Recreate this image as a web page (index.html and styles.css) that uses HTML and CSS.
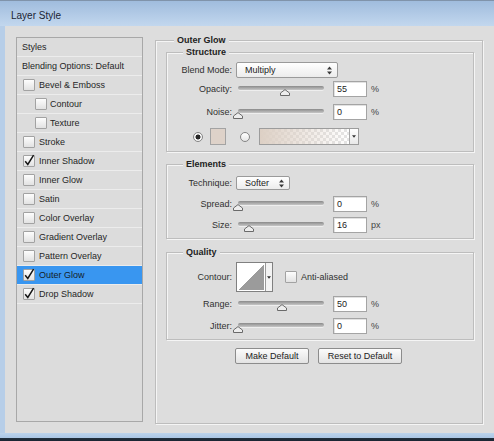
FILE: index.html
```html
<!DOCTYPE html>
<html>
<head>
<meta charset="utf-8">
<title>Layer Style</title>
<link rel="stylesheet" href="styles.css">
</head>
<body>
<div class="window">
  <div class="titlebar">Layer Style</div>
  <div class="frame">
    <div class="stylelist">
      <div class="row head">Styles</div>
      <div class="row head">Blending Options: Default</div>
      <div class="row"><span class="cb"></span>Bevel &amp; Emboss</div>
      <div class="row sub"><span class="cb"></span>Contour</div>
      <div class="row sub"><span class="cb"></span>Texture</div>
      <div class="row"><span class="cb"></span>Stroke</div>
      <div class="row"><span class="cb"><svg class="tick" viewBox="0 0 12 12"><path d="M2.2 6.2 L4.8 9.4 L10.6 0.2"/></svg></span>Inner Shadow</div>
      <div class="row"><span class="cb"></span>Inner Glow</div>
      <div class="row"><span class="cb"></span>Satin</div>
      <div class="row"><span class="cb"></span>Color Overlay</div>
      <div class="row"><span class="cb"></span>Gradient Overlay</div>
      <div class="row"><span class="cb"></span>Pattern Overlay</div>
      <div class="row sel"><span class="cb"><svg class="tick" viewBox="0 0 12 12"><path d="M2.2 6.2 L4.8 9.4 L10.6 0.2"/></svg></span>Outer Glow</div>
      <div class="row"><span class="cb"><svg class="tick" viewBox="0 0 12 12"><path d="M2.2 6.2 L4.8 9.4 L10.6 0.2"/></svg></span>Drop Shadow</div>
    </div>

    <div class="group outer">
      <div class="gtitle">Outer Glow</div>

      <div class="group inner structure">
        <div class="gtitle">Structure</div>
        <div class="field f-blend">
          <span class="lbl">Blend Mode:</span>
          <div class="select wide"><span>Multiply</span><svg class="updown" viewBox="0 0 5 9"><path d="M0 3.5 L2.5 0.5 L5 3.5Z M0 5.5 L2.5 8.5 L5 5.5Z"/></svg></div>
        </div>
        <div class="field f-opacity">
          <span class="lbl">Opacity:</span>
          <div class="slider"><div class="track"><svg class="thumb" style="left:55%" viewBox="0 0 10 7"><path d="M0.5 6.5 L0.5 4 L5 0.6 L9.5 4 L9.5 6.5 Z"/></svg></div></div>
          <div class="num">55</div><span class="unit">%</span>
        </div>
        <div class="field f-noise">
          <span class="lbl">Noise:</span>
          <div class="slider"><div class="track"><svg class="thumb" style="left:0%" viewBox="0 0 10 7"><path d="M0.5 6.5 L0.5 4 L5 0.6 L9.5 4 L9.5 6.5 Z"/></svg></div></div>
          <div class="num">0</div><span class="unit">%</span>
        </div>
        <div class="field f-color">
          <span class="radio on"></span>
          <span class="swatch"></span>
          <span class="radio r2"></span>
          <div class="gradpick"><span class="gfill"></span><span class="gdrop"><svg viewBox="0 0 5 3"><path d="M0 0 L5 0 L2.5 3Z"/></svg></span></div>
        </div>
      </div>

      <div class="group inner elements">
        <div class="gtitle">Elements</div>
        <div class="field f-tech">
          <span class="lbl">Technique:</span>
          <div class="select narrow"><span>Softer</span><svg class="updown" viewBox="0 0 5 9"><path d="M0 3.5 L2.5 0.5 L5 3.5Z M0 5.5 L2.5 8.5 L5 5.5Z"/></svg></div>
        </div>
        <div class="field f-spread">
          <span class="lbl">Spread:</span>
          <div class="slider"><div class="track"><svg class="thumb" style="left:0%" viewBox="0 0 10 7"><path d="M0.5 6.5 L0.5 4 L5 0.6 L9.5 4 L9.5 6.5 Z"/></svg></div></div>
          <div class="num">0</div><span class="unit">%</span>
        </div>
        <div class="field f-size">
          <span class="lbl">Size:</span>
          <div class="slider"><div class="track"><svg class="thumb" style="left:13%" viewBox="0 0 10 7"><path d="M0.5 6.5 L0.5 4 L5 0.6 L9.5 4 L9.5 6.5 Z"/></svg></div></div>
          <div class="num">16</div><span class="unit">px</span>
        </div>
      </div>

      <div class="group inner quality">
        <div class="gtitle">Quality</div>
        <div class="field f-contour">
          <span class="lbl">Contour:</span>
          <div class="contour"><span class="cprev"></span><span class="cdrop"><svg viewBox="0 0 5 3"><path d="M0 0 L5 0 L2.5 3Z"/></svg></span></div>
          <span class="cb aa"></span><span class="aatext">Anti-aliased</span>
        </div>
        <div class="field f-range">
          <span class="lbl">Range:</span>
          <div class="slider"><div class="track"><svg class="thumb" style="left:51%" viewBox="0 0 10 7"><path d="M0.5 6.5 L0.5 4 L5 0.6 L9.5 4 L9.5 6.5 Z"/></svg></div></div>
          <div class="num">50</div><span class="unit">%</span>
        </div>
        <div class="field f-jitter">
          <span class="lbl">Jitter:</span>
          <div class="slider"><div class="track"><svg class="thumb" style="left:0%" viewBox="0 0 10 7"><path d="M0.5 6.5 L0.5 4 L5 0.6 L9.5 4 L9.5 6.5 Z"/></svg></div></div>
          <div class="num">0</div><span class="unit">%</span>
        </div>
      </div>

      <div class="buttons">
        <div class="btn b-make">Make Default</div>
        <div class="btn b-reset">Reset to Default</div>
      </div>
    </div>
  </div>
  <div class="bottombar"></div>
</div>
</body>
</html>
```

FILE: styles.css
```css
* { box-sizing: border-box; }
html, body { margin: 0; padding: 0; }
body {
  width: 494px;
  height: 441px;
  overflow: hidden;
  font-family: "Liberation Sans", Arial, sans-serif;
  font-size: 9px;
  color: #2b2b2b;
  background: #dddddd;
}
.window {
  width: 494px;
  height: 441px;
  display: flex;
  flex-direction: column;
}
.titlebar {
  flex: none;
  height: 26px;
  padding: 9px 0 0 11px;
  line-height: 12px;
  font-size: 10px;
  color: #1a2434;
  border-top: 1px solid #8093aa;
  background: linear-gradient(#a0bcdd, #c2d7ee);
}
.frame {
  flex: 1;
  display: flex;
  align-items: flex-start;
  gap: 12px;
  padding: 11px 0 0 11px;
  border-left: 5px solid #b7cee8;
  background: #dddddd;
}
.bottombar {
  flex: none;
  height: 8px;
  background: linear-gradient(#bcd3ec 0, #aac6e4 5px, #22303e 5px, #1a2532 8px);
}

/* style list */
.stylelist {
  flex: none;
  width: 127px;
  height: 385px;
  border: 1px solid #a8a8a8;
  background: #dcdcdc;
}
.row {
  height: 19px;
  display: flex;
  align-items: center;
  padding-left: 6px;
  border-bottom: 1px solid #ececec;
  color: #262626;
  white-space: nowrap;
}
.row.head { padding-left: 5px; }
.row.sub { padding-left: 18px; }
.row.sel { background: #3996f0; color: #141c28; }
.cb {
  position: relative;
  flex: none;
  width: 12px;
  height: 12px;
  margin-right: 4px;
  border: 1px solid #a2a2a2;
  border-radius: 1px;
  background: linear-gradient(#fdfdfd, #e2e2e2);
}
.row.sub .cb { margin-right: 3px; }
.tick {
  position: absolute;
  left: -1px;
  top: -1px;
  width: 12px;
  height: 12px;
  overflow: visible;
}
.tick path {
  fill: none;
  stroke: #151515;
  stroke-width: 1.5;
}

/* group boxes */
.group {
  border: 1px solid #bdbdbd;
  box-shadow: inset 1px 1px 0 #f5f5f5, 1px 1px 0 #f5f5f5;
}
.group.outer {
  flex: none;
  width: 328px;
  height: 384px;
  margin-top: 3px;
  padding: 0 8px 0 10px;
}
.gtitle {
  width: fit-content;
  height: 12px;
  margin: -7px 0 0 8px;
  padding: 0 3px;
  line-height: 12px;
  font-weight: bold;
  color: #222222;
  background: #dddddd;
}
.group.inner .gtitle { margin-left: 16px; }
.group.structure { margin-top: 6px; padding-bottom: 6px; }
.group.elements { margin-top: 12px; padding-bottom: 5px; }
.group.quality { margin-top: 13px; padding-bottom: 5px; }

.field {
  display: flex;
  align-items: center;
  height: 16px;
}
.lbl {
  flex: none;
  width: 65px;
  margin-right: 4px;
  text-align: right;
  color: #303030;
  white-space: nowrap;
}
.f-blend { margin-top: 4px; }
.f-opacity { margin-top: 3px; }
.f-noise { margin-top: 7px; }
.f-color { margin-top: 8px; height: 17px; padding-left: 26px; }
.f-tech { margin-top: 6px; height: 14px; }
.f-spread { margin-top: 6px; }
.f-size { margin-top: 5px; }
.f-contour { margin-top: 4px; height: 30px; }
.f-range { margin-top: 4px; }
.f-jitter { margin-top: 6px; }

/* selects */
.select {
  flex: none;
  display: flex;
  align-items: center;
  justify-content: space-between;
  height: 100%;
  padding: 0 5px 0 8px;
  border: 1px solid #9a9a9a;
  border-radius: 2px;
  background: linear-gradient(#ffffff, #ececec);
  color: #222;
}
.select.wide { width: 102px; }
.select.narrow { width: 54px; }
.updown { width: 5px; height: 9px; }
.updown path { fill: #3a3a3a; }

/* sliders */
.slider {
  flex: none;
  width: 88px;
  height: 16px;
  margin-right: 9px;
}
.track {
  position: relative;
  height: 4px;
  margin: 5px 0 0 2px;
  border-radius: 2px;
  background: linear-gradient(#8a8a8a, #c6c6c6);
  box-shadow: 0 1px 0 #eeeeee;
}
.thumb {
  position: absolute;
  top: 3px;
  width: 10px;
  height: 7px;
  margin-left: -5px;
  overflow: visible;
}
.thumb path {
  fill: #ededed;
  stroke: #6a6a6a;
  stroke-width: 1;
}
.num {
  flex: none;
  width: 34px;
  height: 16px;
  padding-left: 3px;
  line-height: 14px;
  border: 1px solid #a4a4a4;
  background: #ffffff;
  box-shadow: inset 1px 1px 0 #e2e2e2;
  color: #222;
}
.unit { margin-left: 4px; color: #444; }

/* color row */
.radio {
  flex: none;
  width: 10px;
  height: 10px;
  border: 1px solid #858585;
  border-radius: 50%;
  background: linear-gradient(#ffffff, #e6e6e6);
}
.radio.on {
  background: radial-gradient(circle, #262626 0 2.2px, #fbfbfb 2.8px, #e8e8e8 100%);
}
.radio.r2 { margin-left: 14px; }
.swatch {
  flex: none;
  width: 16px;
  height: 17px;
  margin-left: 7px;
  border: 1px solid #a3a3a3;
  background: #ded2c9;
}
.gradpick {
  flex: none;
  display: flex;
  width: 100px;
  height: 17px;
  margin-left: 9px;
  border: 1px solid #9c9c9c;
  background: #f4f4f4;
}
.gfill {
  flex: 1;
  background:
    linear-gradient(to right, #ddd0c5, rgba(221, 208, 197, 0)),
    repeating-conic-gradient(#ffffff 0 25%, #e4e4e4 0 50%) 0 0 / 6px 6px;
}
.gdrop {
  flex: none;
  width: 9px;
  display: flex;
  align-items: center;
  justify-content: center;
  border-left: 1px solid #a8a8a8;
  background: linear-gradient(#ffffff, #e8e8e8);
}
.gdrop svg, .cdrop svg { width: 4px; height: 3px; }
.gdrop path, .cdrop path { fill: #333; }

/* contour */
.contour {
  flex: none;
  display: flex;
  width: 37px;
  height: 30px;
  border: 1px solid #808080;
  background: #ffffff;
}
.cprev {
  flex: 1;
  margin: 1px;
  background: linear-gradient(to top left, #9b9b9b 50%, #ffffff 50%);
}
.cdrop {
  flex: none;
  width: 7px;
  display: flex;
  align-items: center;
  justify-content: center;
  border-left: 1px solid #9a9a9a;
  background: #f3f3f3;
}
.cb.aa { margin-left: 12px; margin-right: 4px; }
.aatext { color: #303030; }

/* buttons */
.buttons {
  display: flex;
  gap: 9px;
  margin-top: 8px;
  padding-left: 69px;
}
.btn {
  height: 16px;
  line-height: 14px;
  text-align: center;
  border: 1px solid #8c8c8c;
  border-radius: 2px;
  background: linear-gradient(#fbfbfb, #e3e3e3);
  color: #222;
}
.b-make { width: 74px; }
.b-reset { width: 84px; }
```
